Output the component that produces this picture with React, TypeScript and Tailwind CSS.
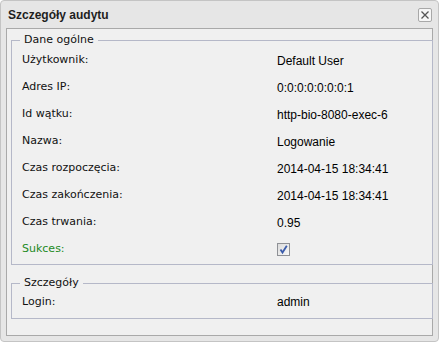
import React from "react";

const rows: { label: string; value: React.ReactNode; green?: boolean }[] = [
  { label: "Użytkownik:", value: "Default User" },
  { label: "Adres IP:", value: "0:0:0:0:0:0:0:1" },
  { label: "Id wątku:", value: "http-bio-8080-exec-6" },
  { label: "Nazwa:", value: "Logowanie" },
  { label: "Czas rozpoczęcia:", value: "2014-04-15 18:34:41" },
  { label: "Czas zakończenia:", value: "2014-04-15 18:34:41" },
  { label: "Czas trwania:", value: "0.95" },
  { label: "Sukces:", value: "__check", green: true },
];

function Check() {
  return (
    <div className="w-[13px] h-[13px] border border-[#8f9196] bg-gradient-to-br from-[#dcdcdc] to-[#f8f8f8] flex items-center justify-center">
      <svg width="11" height="11" viewBox="0 0 11 11">
        <path d="M2.5 5.5 L4.5 8.5 L8.8 1.8" stroke="#3b5cab" strokeWidth="1.8" fill="none" />
      </svg>
    </div>
  );
}

function Row({ label, value, green, h }: { label: string; value: React.ReactNode; green?: boolean; h: string }) {
  return (
    <div className={`flex items-center ${h}`}>
      <div
        className={`w-[265px] pl-[10px] text-[11px] ${green ? "text-[#238a23]" : "text-[#111]"}`}
        style={{ fontFamily: '"DejaVu Sans", sans-serif' }}
      >
        {label}
      </div>
      <div className="text-[12px] text-black" style={{ fontFamily: '"Liberation Sans", Arial, sans-serif' }}>
        {value === "__check" ? <Check /> : value}
      </div>
    </div>
  );
}

export default function App() {
  return (
    <div className="w-[439px] h-[342px] bg-white">
      <div className="w-full h-full rounded-[4px] border border-[#c4c4c4] bg-[#e6e6e6] flex flex-col">
        <div className="h-[27px] flex items-center justify-between pl-[7px] pr-[6px]">
          <div className="text-[12px] font-bold text-[#1e1e1e]" style={{ fontFamily: '"Liberation Sans", Arial, sans-serif' }}>
            Szczegóły audytu
          </div>
          <div className="w-[14px] h-[14px] rounded-[2px] border border-[#a8a8a8] bg-[#f6f6f6] flex items-center justify-center">
            <svg width="10" height="10" viewBox="0 0 10 10">
              <path d="M1.5 1.5 L8.5 8.5 M8.5 1.5 L1.5 8.5" stroke="#555" strokeWidth="1.3" />
            </svg>
          </div>
        </div>
        <div className="flex-1 mx-[5px] mb-[5px] border border-[#a9a9a9] bg-[#f0f0f0] flex flex-col">
          <fieldset className="ml-[4px] mr-[-1px] mt-[4px] border border-[#b5b8c8] pb-[1px]">
            <legend
              className="ml-[8px] px-[4px] text-[11px] leading-[14px] text-[#111]"
              style={{ fontFamily: '"DejaVu Sans", sans-serif' }}
            >
              Dane ogólne
            </legend>
            {rows.map((r) => (
              <Row key={r.label} label={r.label} value={r.value} green={r.green} h="h-[27px]" />
            ))}
          </fieldset>
          <fieldset className="ml-[4px] mr-[-1px] mt-[11px] border border-[#b5b8c8] pb-[4px]">
            <legend
              className="ml-[8px] px-[4px] text-[11px] leading-[14px] text-[#111]"
              style={{ fontFamily: '"DejaVu Sans", sans-serif' }}
            >
              Szczegóły
            </legend>
            <Row label="Login:" value="admin" h="h-[24px]" />
          </fieldset>
        </div>
      </div>
    </div>
  );
}
